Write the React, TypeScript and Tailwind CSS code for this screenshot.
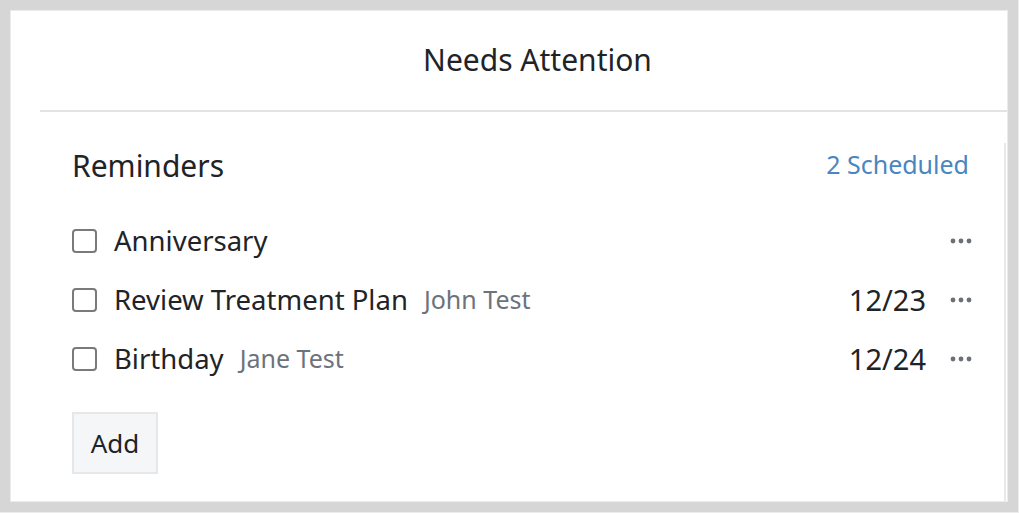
import { useState } from 'react'

interface ReminderProps {
  title: string
  person?: string
  date?: string
}

const reminders: ReminderProps[] = [
  { title: 'Anniversary' },
  { title: 'Review Treatment Plan', person: 'John Test', date: '12/23' },
  { title: 'Birthday', person: 'Jane Test', date: '12/24' },
]

function Dots() {
  return (
    <svg width="22" height="6" viewBox="0 0 22 6" className="text-[#6b7077]">
      <circle cx="3" cy="3" r="2.4" fill="currentColor" />
      <circle cx="11" cy="3" r="2.4" fill="currentColor" />
      <circle cx="19" cy="3" r="2.4" fill="currentColor" />
    </svg>
  )
}

function ReminderRow({ title, person, date }: ReminderProps) {
  const [done, setDone] = useState(false)

  return (
    <div className="flex h-[59px] items-center pt-[1px]">
      <button
        type="button"
        onClick={() => setDone(!done)}
        className="h-[24px] w-[25px] shrink-0 rounded-[4px] border-2 border-[#7a7a7a] bg-white"
      />
      <span className="ml-[17px] text-[27.5px] text-[#202327]">{title}</span>
      {person && (
        <span className="ml-[16px] text-[25px] text-[#6c737b]">{person}</span>
      )}
      <span className="ml-auto text-[29px] text-[#202327]">{date}</span>
      <div className="ml-[24px] flex w-[22px] items-center">
        <Dots />
      </div>
    </div>
  )
}

export default function App() {
  return (
    <div
      className="box-border h-[513px] w-[1019px] border-r border-b border-[#ececec] bg-[#d6d6d6] pt-[10px] pl-[10px]"
      style={{ fontFamily: '"Noto Sans", sans-serif' }}
    >
      <div className="flex h-[492px] w-[998px] flex-col border border-[#ebebeb] bg-white">
        <div className="flex h-[99px] items-center justify-center pb-[3px] pl-[57px] text-[30px] text-[#202327]">
          Needs Attention
        </div>
        <div className="ml-[29px] h-[2px] bg-[#e3e3e3]" />
        <div className="flex flex-1 flex-col pt-[31px] pl-[29px] pr-[1px]">
          <div className="flex-1 border-r-2 border-[#e8e8e8] pl-[32px] pr-[32px]">
            <div className="flex h-[44px] items-center justify-between">
              <span className="text-[30px] text-[#202327]">Reminders</span>
              <span className="mr-[3px] text-[25px] text-[#4a86bf]">2 Scheduled</span>
            </div>
            <div className="mt-[24px]">
              {reminders.map((r) => (
                <ReminderRow key={r.title} {...r} />
              ))}
            </div>
            <button
              type="button"
              className="mt-[24px] h-[62px] w-[86px] border-2 border-[#e6e7e9] bg-[#f5f6f8] text-[26px] text-[#202327]"
            >
              Add
            </button>
          </div>
        </div>
      </div>
    </div>
  )
}
